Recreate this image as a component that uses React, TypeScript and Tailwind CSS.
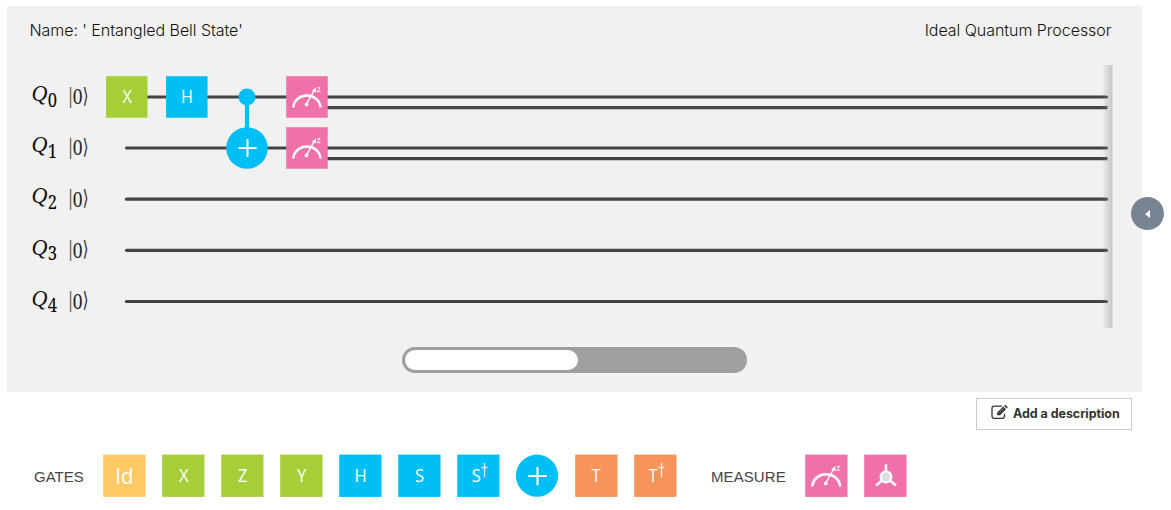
import React from "react";

const WIRES = [31, 82, 133.2, 184.3, 235.5];
const GATE_FONT = '"Open Sans", "Noto Sans", sans-serif';
const GREEN = "#a6ce39";
const BLUE = "#00bff5";
const ORANGE = "#f69459";
const PINK = "#f070aa";

function Letter({ children, size = 17.8, dx = 0, dy = 0 }: { children: string; size?: number; dx?: number; dy?: number }) {
  return (
    <text
      transform={`translate(${21 + dx} ${27.3 + dy}) scale(0.93 1)`}
      textAnchor="middle"
      fontFamily={GATE_FONT}
      fontSize={size}
      fill="#fff"
    >
      {children}
    </text>
  );
}

function Meter() {
  return (
    <g fill="none" stroke="#fff">
      <path d="M7.4 32 V30.5 A14 13 0 0 1 35 30.5 V32" strokeWidth="2.5" />
      <path d="M20.7 28.5 L29 14" strokeWidth="1.4" />
      <circle cx="20.8" cy="28.9" r="1.9" fill="#fff" stroke="none" />
      <path d="M26.2 14.8 L30.4 11.6 L30.6 16.8 Z" fill="#fff" stroke="none" />
      <path d="M31.8 11.8 H34.6 L31.8 15.8 H35.2" strokeWidth="1" />
    </g>
  );
}

function Plus() {
  return <path d="M12.2 21.5 H30.8 M21.5 12.4 V30.8" stroke="#fff" strokeWidth="2" fill="none" />;
}

function Bloch() {
  return (
    <g stroke="#fff" fill="none">
      <path d="M22 9.8 V17 M18 26 L12 31 M26 26 L32 31" strokeWidth="2.5" />
      <circle cx="22" cy="22.4" r="5.4" fill="#dedede" strokeWidth="2.2" />
    </g>
  );
}

function Dagger({ letter, dx }: { letter: string; dx: number }) {
  return (
    <>
      <Letter dx={dx}>{letter}</Letter>
      <path d="M27.5 8.5 V22.5 M24.6 13 H30.4" stroke="#fff" strokeWidth="1.3" opacity="0.85" />
    </>
  );
}

function Tile({ color, children }: { color: string; children: React.ReactNode }) {
  return (
    <svg width="43" height="43" viewBox="0 -0.5 43 43" className="block shrink-0">
      <rect x="0.2" y="0.1" width="42.3" height="42.3" fill={color} />
      {children}
    </svg>
  );
}

function Gate({ x, wire, color, children }: { x: number; wire: number; color: string; children: React.ReactNode }) {
  return (
    <g transform={`translate(${x} ${WIRES[wire] - 20.8}) scale(0.977)`}>
      <rect width="42.5" height="42.5" fill={color} />
      {children}
    </g>
  );
}

function EditIcon() {
  return (
    <svg width="18" height="15" viewBox="0 0 18 15" className="mr-1 shrink-0" fill="none">
      <path d="M13.5 8.7 V11 Q13.5 13.4 11.1 13.4 H3.4 Q1 13.4 1 11 V3.6 Q1 1.2 3.4 1.2 H10.8" stroke="#333" strokeWidth="1.3" />
      <path d="M6.2 7.5 L12.2 1.5 L15 4.3 L9 10.3 H6.2 Z M13 0.8 L13.6 0.2 Q14.2 -0.2 14.8 0.3 L16.3 1.8 Q16.8 2.4 16.3 2.9 L15.7 3.5 Z" fill="#333" />
      <path d="M8.4 7.4 L12.4 3.4" stroke="#fff" strokeWidth="0.5" />
    </svg>
  );
}

function Circuit() {
  return (
    <svg width="1135" height="264" viewBox="0 0 1135 264" className="block overflow-visible">
      <defs>
        <linearGradient id="edge">
          <stop offset="0" stopColor="#999" stopOpacity="0.08" />
          <stop offset="1" stopColor="#999" stopOpacity="0.5" />
        </linearGradient>
      </defs>
      {WIRES.map((y, i) => (
        <g key={y}>
          <text transform={`translate(24.4 ${y + 4.2}) scale(0.92 1)`} fontFamily='"Liberation Serif", serif' fontStyle="italic" fontSize="24" fill="#111">Q</text>
          <text transform={`translate(40.8 ${y + 10}) scale(0.83 1)`} fontFamily='"Noto Serif", "DejaVu Serif Condensed", "DejaVu Serif", serif' fontSize="20">{i}</text>
          <g fontFamily='"Liberation Serif", serif' fontSize="23">
            <text x="61.3" y={y + 5.7} fill="#555">|</text>
            <text transform={`translate(65.7 ${y + 7.4}) scale(0.83 1)`} fontSize="23.5" fill="#222">0</text>
            <text transform={`translate(75.5 ${y + 5.6}) scale(0.75 1)`} fontFamily='"DejaVu Sans", sans-serif' fontSize="21" fill="#333">⟩</text>
          </g>
          <line x1={i === 0 ? 130 : 119.5} x2="1099.5" y1={y} y2={y} stroke="#444" strokeWidth="3.2" strokeLinecap="round" />
        </g>
      ))}
      {[0, 1].map((i) => (
        <line key={i} x1="310" x2="1100.5" y1={WIRES[i] + 10.6} y2={WIRES[i] + 10.6} stroke="#444" strokeWidth="3.2" />
      ))}
      <Gate x={99} wire={0} color={GREEN}><Letter dx={0.7}>X</Letter></Gate>
      <Gate x={159} wire={0} color={BLUE}><Letter dx={0.5}>H</Letter></Gate>
      <line x1="240" x2="240" y1="31" y2="70" stroke={BLUE} strokeWidth="4.2" />
      <circle cx="240" cy="31" r="8.5" fill={BLUE} />
      <circle cx="240" cy="82" r="20.8" fill={BLUE} />
      <path d="M231.4 82 H249.6 M240.5 73 V91" stroke="#fff" strokeWidth="2" />
      <Gate x={279.2} wire={0} color={PINK}><Meter /></Gate>
      <Gate x={279.2} wire={1} color={PINK}><Meter /></Gate>
      <rect x="1096" y="-1" width="9.5" height="263" fill="url(#edge)" />
    </svg>
  );
}

export default function App() {
  return (
    <div className="h-[510px] w-[1171px] overflow-hidden bg-white pt-1.5 pl-[7px]">
      <section className="relative flex h-[386px] w-[1135px] flex-col bg-[#f1f1f1]">
        <header className="flex h-[60px] shrink-0 justify-between pt-3 pr-[30.5px] pl-[22.5px] font-['Inter',sans-serif] text-base leading-6 font-light text-[#111]">
          <span className="w-max tracking-[-0.06px] whitespace-pre">Name: ' Entangled Bell State'</span>
          <span className="tracking-[-0.04px]">Ideal Quantum Processor</span>
        </header>
        <Circuit />
        <div className="mt-[17.4px] ml-[394.5px] h-[25.6px] w-[345.5px] shrink-0 rounded-full bg-[#a09e9f] p-[3px]">
          <div className="h-[19.5px] w-[173.5px] rounded-full bg-white" />
        </div>
        <button className="absolute top-[191px] left-[1124px] flex size-[33px] items-center justify-center rounded-full bg-[#778593]">
          <svg width="5" height="8" viewBox="0 0 5 8"><path d="M5 0 V8 L0 4 Z" fill="#fff" /></svg>
        </button>
      </section>
      <div className="flex w-[1125px] justify-end pt-1.5">
        <button className="flex h-8 w-[156px] items-center border border-[#ccc] pb-1 pl-3.5 font-['Inter',sans-serif] text-[12.5px] font-bold whitespace-nowrap text-[#333]">
          <EditIcon />
          <span className="pt-[5px] tracking-[-0.05px]">Add a description</span>
        </button>
      </div>
      <div className="mt-6 flex h-[43px] items-center pl-[27px] font-['Liberation_Sans',sans-serif] text-[15px] text-[#444]">
        <span className="w-[69px] pt-[3px]">GATES</span>
        <div className="flex gap-4">
          <Tile color="#ffc966"><Letter size={22} dx={0.3} dy={1.7}>Id</Letter></Tile>
          <Tile color={GREEN}><Letter dx={0.7}>X</Letter></Tile>
          <Tile color={GREEN}><Letter dx={0.7}>Z</Letter></Tile>
          <Tile color={GREEN}><Letter dx={0.7}>Y</Letter></Tile>
          <Tile color={BLUE}><Letter dx={0.5}>H</Letter></Tile>
          <Tile color={BLUE}><Letter dx={0.5}>S</Letter></Tile>
          <Tile color={BLUE}><Dagger letter="S" dx={-1.7} /></Tile>
          <svg width="43" height="43" viewBox="0 -0.5 43 43"><circle cx="21" cy="21.2" r="21.1" fill={BLUE} /><Plus /></svg>
          <Tile color={ORANGE}><Letter dx={0.1}>T</Letter></Tile>
          <Tile color={ORANGE}><Dagger letter="T" dx={-2} /></Tile>
        </div>
        <span className="ml-[34px] w-[94px] pt-[3px] tracking-[0.08px]">MEASURE</span>
        <div className="flex gap-4">
          <Tile color={PINK}><Meter /></Tile>
          <Tile color={PINK}><Bloch /></Tile>
        </div>
      </div>
    </div>
  );
}
